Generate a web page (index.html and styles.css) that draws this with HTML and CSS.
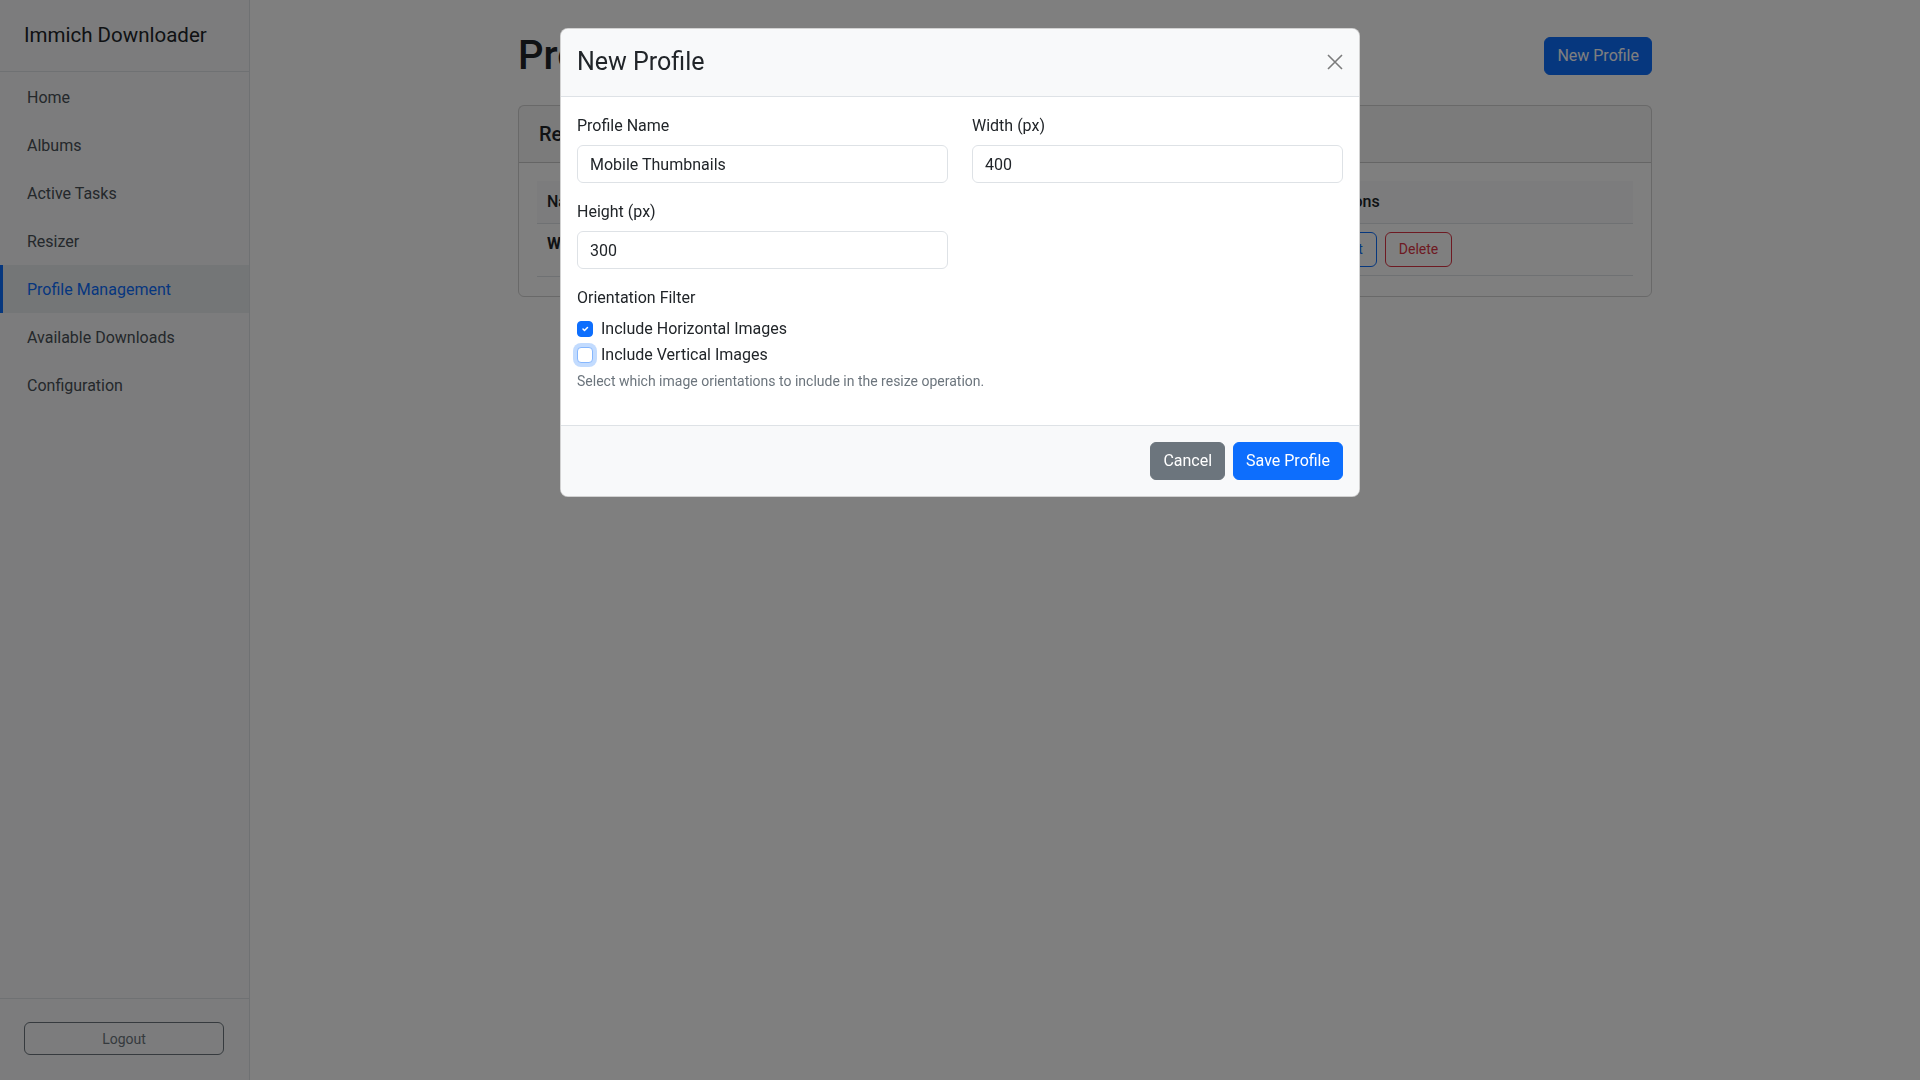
FILE: index.html
```html
<!DOCTYPE html>
<html lang="en">
<head>
<meta charset="utf-8">
<title>Immich Downloader - Profile Management</title>
<link rel="stylesheet" href="styles.css">
</head>
<body>
<div class="app">
  <aside class="sidebar">
    <div class="brand">Immich Downloader</div>
    <nav class="nav">
      <a class="nav-link" href="#">Home</a>
      <a class="nav-link" href="#">Albums</a>
      <a class="nav-link" href="#">Active Tasks</a>
      <a class="nav-link" href="#">Resizer</a>
      <a class="nav-link active" href="#">Profile Management</a>
      <a class="nav-link" href="#">Available Downloads</a>
      <a class="nav-link" href="#">Configuration</a>
    </nav>
    <div class="sidebar-footer">
      <button class="btn-logout" type="button">Logout</button>
    </div>
  </aside>
  <main class="main">
    <div class="container">
      <div class="page-header">
        <h1 class="page-title">Profile Management</h1>
        <button class="btn btn-primary" type="button">New Profile</button>
      </div>
      <div class="card">
        <div class="card-header"><h5 class="card-title">Resize Profiles</h5></div>
        <div class="card-body">
          <table class="table">
            <thead>
              <tr>
                <th class="col-name">Name</th>
                <th class="col-w">Width</th>
                <th class="col-h">Height</th>
                <th class="col-o">Orientation</th>
                <th class="col-actions">Actions</th>
              </tr>
            </thead>
            <tbody>
              <tr>
                <td class="cell-name">Web Gallery</td>
                <td>1920</td>
                <td>1080</td>
                <td>Both</td>
                <td class="cell-actions">
                  <button class="btn-sm btn-outline-primary" type="button">Edit</button>
                  <button class="btn-sm btn-outline-danger" type="button">Delete</button>
                </td>
              </tr>
            </tbody>
          </table>
        </div>
      </div>
    </div>
  </main>
</div>

<div class="backdrop"></div>

<div class="modal">
  <div class="modal-dialog">
    <div class="modal-content">
      <div class="modal-header">
        <h4 class="modal-title">New Profile</h4>
        <button class="btn-close" type="button" aria-label="Close">
          <svg width="16" height="16" viewBox="0 0 16 16"><path d="M1 1L15 15M15 1L1 15" stroke="#000" stroke-width="1.6" fill="none"/></svg>
        </button>
      </div>
      <div class="modal-body">
        <div class="form-row">
          <div class="form-group">
            <label class="form-label">Profile Name</label>
            <input class="form-control" type="text" value="Mobile Thumbnails">
          </div>
          <div class="form-group">
            <label class="form-label">Width (px)</label>
            <input class="form-control" type="text" value="400">
          </div>
        </div>
        <div class="form-row">
          <div class="form-group">
            <label class="form-label">Height (px)</label>
            <input class="form-control" type="text" value="300">
          </div>
        </div>
        <div class="form-group">
          <label class="form-label">Orientation Filter</label>
          <div class="form-check">
            <span class="check-box checked">
              <svg width="10" height="10" viewBox="0 0 20 20"><path d="M6 10l3 3l6-6" stroke="#fff" stroke-width="3" fill="none" stroke-linecap="round" stroke-linejoin="round"/></svg>
            </span>
            <span class="check-label">Include Horizontal Images</span>
          </div>
          <div class="form-check">
            <span class="check-box focused"></span>
            <span class="check-label">Include Vertical Images</span>
          </div>
          <div class="form-text">Select which image orientations to include in the resize operation.</div>
        </div>
      </div>
      <div class="modal-footer">
        <button class="btn btn-secondary" type="button">Cancel</button>
        <button class="btn btn-primary" type="button">Save Profile</button>
      </div>
    </div>
  </div>
</div>
</body>
</html>
```
FILE: styles.css
```css
* { box-sizing: border-box; }
html, body { margin: 0; padding: 0; }
body {
  font-family: Roboto, "Noto Sans", "Liberation Sans", sans-serif;
  font-size: 16px;
  line-height: 1.5;
  color: #212529;
  background: #fff;
  overflow: hidden;
}
.app { display: flex; height: 100vh; }

/* Sidebar */
.sidebar {
  width: 250px;
  flex: 0 0 250px;
  background: #f8f9fa;
  border-right: 1px solid #dee2e6;
  display: flex;
  flex-direction: column;
}
.brand {
  height: 72px;
  padding: 0 24px;
  display: flex;
  align-items: center;
  font-size: 20.5px;
  font-weight: 400;
  color: #212529;
  border-bottom: 1px solid #dee2e6;
}
.nav { display: flex; flex-direction: column; padding-top: 1px; }
.nav-link {
  display: block;
  height: 48px;
  padding: 13px 24px 11px;
  border-left: 3px solid transparent;
  color: #495057;
  text-decoration: none;
  font-size: 16px;
  line-height: 24px;
}
.nav-link.active {
  background: #e9ecef;
  color: #0d6efd;
  border-left-color: #0d6efd;
}
.sidebar-footer {
  margin-top: auto;
  border-top: 1px solid #dee2e6;
  padding: 23px 25px 25px 24px;
}
.btn-logout {
  display: block;
  width: 100%;
  height: 33px;
  background: transparent;
  border: 1px solid #6c757d;
  border-radius: 6px;
  color: #6c757d;
  font-family: inherit;
  font-size: 14px;
}

/* Main */
.main { flex: 1; min-width: 0; }
.container { width: 1134px; margin: 0 auto; padding-top: 32px; }
.page-header { display: flex; justify-content: space-between; align-items: center; }
.page-title { margin: 0; font-size: 40px; font-weight: 500; line-height: 1.2; }

.btn {
  display: inline-block;
  font-family: inherit;
  font-size: 16px;
  line-height: 24px;
  padding: 6px 12px;
  border: 1px solid transparent;
  border-radius: 6px;
  color: #fff;
}
.btn-primary { background: #0d6efd; border-color: #0d6efd; }
.btn-secondary { background: #6c757d; border-color: #6c757d; }

.card {
  margin-top: 25px;
  border: 1px solid rgba(0,0,0,.175);
  border-radius: 6px;
}
.card-header {
  padding: 16px 20px;
  background: rgba(0,0,0,.03);
  border-bottom: 1px solid rgba(0,0,0,.175);
}
.card-title { margin: 0; font-size: 20px; font-weight: 500; line-height: 24px; }
.card-body { padding: 18px 18px 19px; }
.table { width: 100%; border-collapse: collapse; table-layout: fixed; }
.table th, .table td {
  text-align: left;
  vertical-align: top;
  padding: 9px 10px;
  border-bottom: 1px solid #dee2e6;
  line-height: 24px;
}
.table th { background: #f8f9fa; font-weight: 500; }
.table td { padding: 8px 10px; }
.col-name { width: 30%; }
.col-w { width: 13%; }
.col-h { width: 13%; }
.col-o { width: 15%; }
.col-actions { width: 29%; }
.cell-name { font-weight: 700; }
.cell-actions { display: flex; gap: 8px; }
.btn-sm {
  font-family: inherit;
  font-size: 14px;
  line-height: 21px;
  padding: 6px 13px;
  border-radius: 6px;
  background: transparent;
}
.btn-outline-primary { border: 1px solid #0d6efd; color: #0d6efd; }
.btn-outline-danger { border: 1px solid #dc3545; color: #dc3545; }

/* Modal */
.backdrop { position: fixed; inset: 0; background: rgba(0,0,0,.5); }
.modal { position: fixed; inset: 0; }
.modal-dialog { width: 800px; margin: 28px auto; }
.modal-content {
  background: #fff;
  border: 1px solid rgba(0,0,0,.175);
  border-radius: 8px;
  overflow: hidden;
}
.modal-header {
  display: flex;
  align-items: center;
  justify-content: space-between;
  padding: 15px 16px 16px;
  background: #f8f9fa;
  border-bottom: 1px solid #dee2e6;
}
.modal-title { margin: 0; font-size: 25px; font-weight: 400; line-height: 36px; }
.btn-close {
  display: flex;
  padding: 0;
  border: 0;
  background: transparent;
  opacity: .5;
}
.modal-body { padding: 16px 16px 17px; }
.form-row { display: grid; grid-template-columns: 1fr 1fr; column-gap: 24px; }
.form-group { margin-bottom: 16px; }
.form-label { display: block; padding-top: 1px; margin-bottom: 7px; font-weight: 400; line-height: 24px; }
.form-control {
  display: block;
  width: 100%;
  height: 38px;
  padding: 6px 12px;
  font-family: inherit;
  font-size: 16px;
  line-height: 24px;
  color: #212529;
  background: #fff;
  border: 1px solid #dee2e6;
  border-radius: 6px;
}
.form-check {
  display: flex;
  align-items: center;
  min-height: 24px;
  margin-bottom: 2px;
}
.check-box {
  width: 16px;
  height: 16px;
  flex: 0 0 16px;
  margin-right: 8px;
  border: 1px solid #dee2e6;
  border-radius: 4px;
  background: #fff;
  display: flex;
  align-items: center;
  justify-content: center;
}
.check-box.checked { background: #0d6efd; border-color: #0d6efd; }
.check-box.focused { border-color: #86b7fe; box-shadow: 0 0 0 4px rgba(13,110,253,.25); }
.check-label { line-height: 24px; }
.form-text { margin-top: 4px; font-size: 14px; line-height: 21px; color: #6c757d; }
.modal-footer {
  display: flex;
  justify-content: flex-end;
  align-items: center;
  gap: 8px;
  padding: 16px;
  background: #f8f9fa;
  border-top: 1px solid #dee2e6;
}
```
